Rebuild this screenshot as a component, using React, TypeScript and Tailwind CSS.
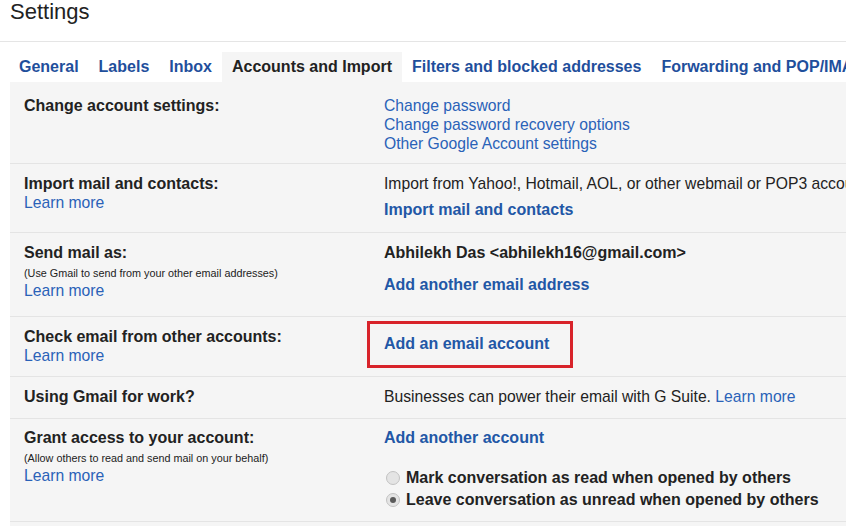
const font = { fontFamily: '"Liberation Sans", Arial, sans-serif' };

const tabs = [
  'General',
  'Labels',
  'Inbox',
  'Accounts and Import',
  'Filters and blocked addresses',
  'Forwarding and POP/IMAP',
  'Add-ons',
  'Chat',
];

function Learn() {
  return <div className="text-[15.7px] leading-[19px] text-[#2a62b8]">Learn more</div>;
}

function Small({ children }: { children: React.ReactNode }) {
  return <div className="mt-[3px] text-[10.8px] leading-[16px] text-[#222]">{children}</div>;
}

function Label({ children }: { children: React.ReactNode }) {
  return <div className="text-[16px] font-bold leading-[19px] text-[#222]">{children}</div>;
}

function Radio({ checked, label }: { checked?: boolean; label: string }) {
  return (
    <div className="flex items-center leading-[22px]">
      <span className="ml-[2px] mr-[6px] flex h-[14px] w-[14px] items-center justify-center rounded-full border border-[#c2c2c2] bg-[#e4e4e4]">
        {checked && <span className="h-[6px] w-[6px] rounded-full bg-[#5a5a5a]" />}
      </span>
      <span className="text-[16px] font-bold text-[#222]">{label}</span>
    </div>
  );
}

function Row({
  left,
  right,
  className,
}: {
  left: React.ReactNode;
  right: React.ReactNode;
  className: string;
}) {
  return (
    <div className={`flex border-b border-[#e4e4e4] pl-[14px] ${className}`}>
      <div className="w-[360px] shrink-0">{left}</div>
      <div className="whitespace-nowrap">{right}</div>
    </div>
  );
}

export default function App() {
  return (
    <div className="h-[526px] w-[846px] overflow-hidden bg-white" style={font}>
      <div className="h-[42px] border-b border-[#e5e5e5] pl-[10px] text-[22px] leading-[24px] text-[#222]">
        Settings
      </div>

      <div className="mt-[10px] flex whitespace-nowrap pl-[9px]">
        {tabs.map((t) => (
          <div
            key={t}
            className={`px-[10px] text-[16px] font-bold leading-[30px] ${
              t === 'Accounts and Import' ? 'bg-[#f5f5f5] text-[#222]' : 'text-[#1f4f9c]'
            }`}
          >
            {t}
          </div>
        ))}
      </div>

      <div className="ml-[10px] bg-[#f5f5f5] pb-[10px]">
        <Row
          className="pb-[10px] pt-[14px]"
          left={<Label>Change account settings:</Label>}
          right={
            <div className="text-[15.7px] leading-[19px] text-[#2a62b8]">
              <div>Change password</div>
              <div>Change password recovery options</div>
              <div>Other Google Account settings</div>
            </div>
          }
        />

        <Row
          className="pb-[13px] pt-[10px]"
          left={
            <>
              <Label>Import mail and contacts:</Label>
              <Learn />
            </>
          }
          right={
            <>
              <div className="text-[15.7px] leading-[19px] text-[#222]">
                Import from Yahoo!, Hotmail, AOL, or other webmail or POP3 accounts.
              </div>
              <div className="mt-[7px] text-[16px] font-bold leading-[19px] text-[#2257a6]">
                Import mail and contacts
              </div>
            </>
          }
        />

        <Row
          className="pb-[16px] pt-[10px]"
          left={
            <>
              <Label>Send mail as:</Label>
              <Small>(Use Gmail to send from your other email addresses)</Small>
              <Learn />
            </>
          }
          right={
            <>
              <div className="text-[16px] font-bold leading-[19px] text-[#222]">
                Abhilekh Das &lt;abhilekh16@gmail.com&gt;
              </div>
              <div className="mt-[13px] text-[16px] font-bold leading-[19px] text-[#2257a6]">
                Add another email address
              </div>
            </>
          }
        />

        <Row
          className="pb-[11px] pt-[10px]"
          left={
            <>
              <Label>Check email from other accounts:</Label>
              <Learn />
            </>
          }
          right={
            <div className="relative mt-[7px] text-[16px] font-bold leading-[19px] text-[#2257a6]">
              Add an email account
              <span className="absolute -top-[13px] left-[-17px] h-[47px] w-[206px] border-[3px] border-[#d8232a]" />
            </div>
          }
        />

        <Row
          className="pb-[12px] pt-[10px]"
          left={<Label>Using Gmail for work?</Label>}
          right={
            <div className="text-[15.7px] leading-[19px] text-[#222]">
              Businesses can power their email with G Suite. <span className="text-[#2a62b8]">Learn more</span>
            </div>
          }
        />

        <Row
          className="pb-[10px] pt-[9px]"
          left={
            <>
              <Label>Grant access to your account:</Label>
              <Small>(Allow others to read and send mail on your behalf)</Small>
              <Learn />
            </>
          }
          right={
            <>
              <div className="text-[16px] font-bold leading-[19px] text-[#2257a6]">Add another account</div>
              <div className="mt-[20px]">
                <Radio label="Mark conversation as read when opened by others" />
                <Radio checked label="Leave conversation as unread when opened by others" />
              </div>
            </>
          }
        />
      </div>
    </div>
  );
}
